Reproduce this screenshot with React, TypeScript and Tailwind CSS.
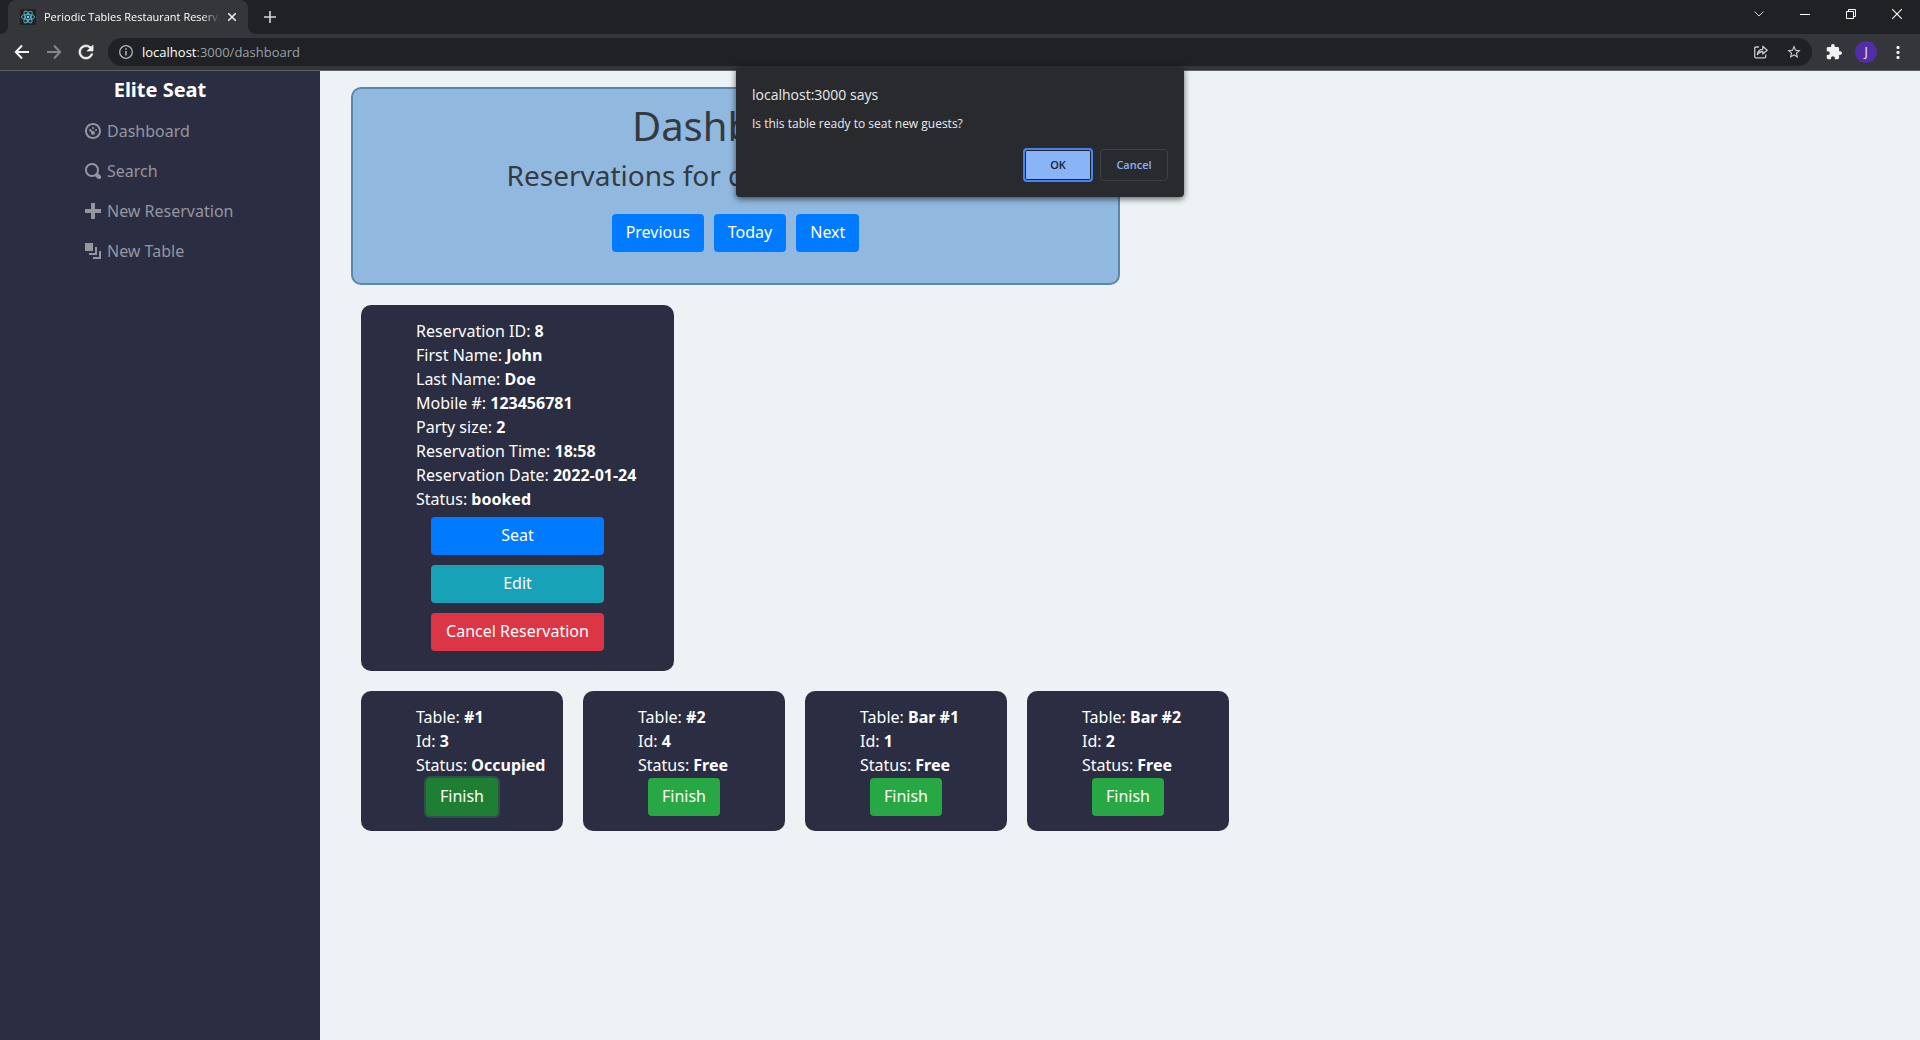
import React from "react";

const appFont = "font-['Noto_Sans','Open_Sans',sans-serif]";
const chromeFont = "font-['Open_Sans','Noto_Sans',sans-serif]";

const OI = {
  dashboard:
    "M4 0c-2.2 0-4 1.8-4 4s1.8 4 4 4 4-1.8 4-4-1.8-4-4-4zm0 1c1.66 0 3 1.34 3 3s-1.34 3-3 3-3-1.34-3-3 1.34-3 3-3zm0 1c-.28 0-.5.22-.5.5s.22.5.5.5.5-.22.5-.5-.22-.5-.5-.5zm-1.66 1a.5.5 0 0 0-.19.84l.91.91c-.02.08-.06.16-.06.25 0 .55.45 1 1 1s1-.45 1-1-.45-1-1-1c-.09 0-.17.04-.25.06l-.91-.91a.5.5 0 0 0-.44-.16.5.5 0 0 0-.06 0zm3.16 0c-.28 0-.5.22-.5.5s.22.5.5.5.5-.22.5-.5-.22-.5-.5-.5z",
  search:
    "M3.5 0c-1.93 0-3.5 1.57-3.5 3.5s1.57 3.5 3.5 3.5c.59 0 1.17-.14 1.66-.41a1 1 0 0 0 .13.13l1 1a1.02 1.02 0 1 0 1.44-1.44l-1-1a1 1 0 0 0-.16-.13c.27-.49.44-1.06.44-1.66 0-1.93-1.55-3.5-3.5-3.5zm0 1c1.39 0 2.5 1.11 2.5 2.5 0 .66-.24 1.27-.66 1.72-.01.01-.02.02-.03.03a1 1 0 0 0-.13.13c-.44.4-1.04.63-1.69.63-1.39 0-2.5-1.11-2.5-2.5s1.11-2.5 2.5-2.5z",
  plus: "M3 0v3h-3v2h3v3h2v-3h3v-2h-3v-3h-2z",
  layers: "M0 0v4h4v-4h-4zm5 2v3h-3v1h4v-4h-1zm2 2v3h-3v1h4v-4h-1z",
};

const navItems = [
  { label: "Dashboard", icon: OI.dashboard },
  { label: "Search", icon: OI.search },
  { label: "New Reservation", icon: OI.plus },
  { label: "New Table", icon: OI.layers },
];

const reservation = [
  ["Reservation ID", "8"],
  ["First Name", "John"],
  ["Last Name", "Doe"],
  ["Mobile #", "123456781"],
  ["Party size", "2"],
  ["Reservation Time", "18:58"],
  ["Reservation Date", "2022-01-24"],
  ["Status", "booked"],
];

const tables = [
  { name: "#1", id: "3", status: "Occupied", active: true },
  { name: "#2", id: "4", status: "Free", active: false },
  { name: "Bar #1", id: "1", status: "Free", active: false },
  { name: "Bar #2", id: "2", status: "Free", active: false },
];

function Favicon() {
  return (
    <svg viewBox="0 0 16 16" className="h-4 w-4 shrink-0">
      <rect width="16" height="16" rx="1" fill="#222222" />
      <g fill="none" stroke="#53b9d1" strokeWidth="0.9">
        <ellipse cx="8" cy="8" rx="6.6" ry="2.6" />
        <ellipse cx="8" cy="8" rx="6.6" ry="2.6" transform="rotate(60 8 8)" />
        <ellipse cx="8" cy="8" rx="6.6" ry="2.6" transform="rotate(120 8 8)" />
      </g>
      <circle cx="8" cy="8" r="1.3" fill="#61dafb" />
    </svg>
  );
}

function TabStrip() {
  return (
    <div className="flex h-[34px] bg-[#202124] text-white">
      <div className="flex w-2 bg-[#35363a]">
        <div className="w-full rounded-br-lg bg-[#202124]" />
      </div>
      <div className="flex w-60 items-center rounded-t-lg bg-[#35363a] pl-3">
        <Favicon />
        <span className="ml-2 w-[176px] overflow-hidden text-[11px] whitespace-nowrap [mask-image:linear-gradient(to_right,black_90%,transparent)]">
          Periodic Tables Restaurant Reservation
        </span>
        <button aria-label="Close tab" className="ml-2">
          <svg viewBox="0 0 8 8" className="h-2 w-2" stroke="#f1f3f4" strokeWidth="1.5">
            <path d="M0 0l8 8M8 0l-8 8" />
          </svg>
        </button>
      </div>
      <div className="flex w-2 bg-[#35363a]">
        <div className="w-full rounded-bl-lg bg-[#202124]" />
      </div>
      <button aria-label="New tab" className="ml-2">
        <svg viewBox="0 0 12 12" className="h-3 w-3" stroke="#d5d7da" strokeWidth="1.6">
          <path d="M6 0v12M0 6h12" />
        </svg>
      </button>
      <div className="ml-auto flex h-7 items-center">
        <button aria-label="Search tabs" className="flex w-[46px] justify-center">
          <svg viewBox="0 0 10 6" className="h-1.5 w-2.5" fill="none" stroke="#d5d7da">
            <path d="M0.5 0.5L5 5L9.500 0.5" />
          </svg>
        </button>
        <button aria-label="Minimize" className="flex w-[46px] justify-center">
          <svg viewBox="0 0 10 10" className="h-2.5 w-2.5" stroke="#fff">
            <path d="M0 5.500h10" />
          </svg>
        </button>
        <button aria-label="Restore" className="flex w-[46px] justify-center">
          <svg viewBox="0 0 10 10" className="h-2.5 w-2.5" fill="none" stroke="#fff">
            <path d="M0.5 2.5h7v7h-7zM2.500 2.500v-2h7v7h-2" />
          </svg>
        </button>
        <button aria-label="Close" className="flex w-[46px] justify-center">
          <svg viewBox="0 0 10 10" className="h-2.5 w-2.5" stroke="#fff" strokeWidth="1.1">
            <path d="M0 0l10 10M10 0L0 10" />
          </svg>
        </button>
      </div>
    </div>
  );
}

function Toolbar() {
  return (
    <div className="flex h-9 items-center bg-[#35363a] pr-[14px] pl-[14px]">
      <button aria-label="Back">
        <svg viewBox="0 0 16 16" className="h-4 w-4" fill="none" stroke="#f1f3f4" strokeWidth="2">
          <path d="M15 8H2M8 1.500L1.800 8L8 14.500" />
        </svg>
      </button>
      <button aria-label="Forward" className="ml-4">
        <svg viewBox="0 0 16 16" className="h-4 w-4" fill="none" stroke="#86878a" strokeWidth="2">
          <path d="M1 8H14M8 1.500L14.200 8L8 14.500" />
        </svg>
      </button>
      <button aria-label="Reload" className="ml-4">
        <svg viewBox="3 3 18 18" className="h-4 w-4" fill="#f1f3f4" stroke="#f1f3f4" strokeWidth="0.6">
          <path d="M17.650 6.350C16.200 4.900 14.210 4 12 4c-4.420 0-7.990 3.580-7.990 8s3.570 8 7.990 8c3.730 0 6.840-2.550 7.730-6h-2.080c-.82 2.330-3.040 4-5.650 4-3.310 0-6-2.690-6-6s2.690-6 6-6c1.660 0 3.140.69 4.220 1.780L13 11h7V4l-2.350 2.350z" />
        </svg>
      </button>
      <div className="ml-[14px] flex h-7 flex-1 items-center rounded-full bg-[#202124] pr-[10px] pl-[11px]">
        <svg viewBox="0 0 14 14" className="h-[14px] w-[14px]" fill="none" stroke="#b5b7ba" strokeWidth="1.300">
          <circle cx="7" cy="7" r="6.300" />
          <path d="M7 6v4.500M7 3.300v1.500" strokeWidth="1.500" />
        </svg>
        <span className="ml-[9px] flex-1 text-[13px] leading-5 text-[#9aa0a6]">
          <span className="text-white">localhost</span>:3000/dashboard
        </span>
        <button aria-label="Share">
          <svg viewBox="0 0 14 14" className="h-[14px] w-[14px]" fill="none" stroke="#c4c6c9" strokeWidth="1.300">
            <path d="M5 2H2Q.7 2 .7 3.300V11.500Q.7 12.800 2 12.800H10.500Q11.800 12.800 11.800 11.500V9.500" />
            <path d="M3.300 9.500Q4 4.300 8.800 4.300V1.300L13.200 5.300L8.800 9V6.500Q5.500 6.500 3.300 9.500Z" strokeLinejoin="round" />
          </svg>
        </button>
        <button aria-label="Bookmark" className="ml-[18px]">
          <svg viewBox="0 0 24 24" className="h-4 w-4" fill="#d0d2d5">
            <path d="M22 9.240l-7.190-.62L12 2 9.190 8.630 2 9.240l5.460 4.730L5.820 21 12 17.270 18.180 21l-1.630-7.030L22 9.240zM12 15.400l-3.760 2.270 1-4.280-3.320-2.880 4.380-.38L12 6.100l1.710 4.040 4.380.38-3.320 2.880 1 4.280L12 15.400z" />
          </svg>
        </button>
      </div>
      <button aria-label="Extensions" className="ml-[14px]">
        <svg viewBox="1 1 22 22" className="h-4 w-4" fill="#f1f3f4">
          <path d="M20.500 11H19V7c0-1.100-.9-2-2-2h-4V3.500C13 2.120 11.880 1 10.500 1S8 2.120 8 3.500V5H4c-1.100 0-1.990.9-1.990 2v3.800H3.500c1.490 0 2.700 1.210 2.700 2.700s-1.210 2.700-2.700 2.700H2V20c0 1.100.9 2 2 2h3.800v-1.500c0-1.490 1.210-2.700 2.700-2.700 1.490 0 2.700 1.210 2.700 2.700V22H17c1.100 0 2-.9 2-2v-4h1.500c1.380 0 2.500-1.120 2.500-2.500S21.880 11 20.500 11z" />
        </svg>
      </button>
      <button
        aria-label="Profile"
        className="ml-[13px] flex h-[22px] w-[22px] items-center justify-center rounded-full bg-[#512da8] text-xs text-white"
      >
        J
      </button>
      <button aria-label="Menu" className="ml-[13px]">
        <svg viewBox="0 0 16 16" className="h-4 w-4" fill="#f1f3f4">
          <rect x="6.500" y="2" width="3" height="3" rx="1" />
          <rect x="6.500" y="7" width="3" height="3" rx="1" />
          <rect x="6.500" y="12" width="3" height="3" rx="1" />
        </svg>
      </button>
    </div>
  );
}

function Sidebar() {
  return (
    <nav className="w-80 shrink-0 bg-[#2b2d42]">
      <h2 className="pt-1 text-center text-xl leading-[30px] font-bold text-white">Elite Seat</h2>
      <ul className="mt-[6px] pl-[85px]">
        {navItems.map((item) => (
          <li key={item.label}>
            <a href="#" className="flex h-10 items-center gap-[6px] text-base text-[#9596a0]">
              <svg viewBox="0 0 8 8" className="h-4 w-4" fill="currentColor">
                <path d={item.icon} />
              </svg>
              {item.label}
            </a>
          </li>
        ))}
      </ul>
    </nav>
  );
}

const btn = "h-[38px] rounded px-[14px] pb-[2px] text-base text-white whitespace-nowrap";

function Field({ label, value }: { label: string; value: string }) {
  return (
    <li className="whitespace-nowrap">
      {label}: <b>{value}</b>
    </li>
  );
}

function ConfirmDialog() {
  return (
    <div
      role="dialog"
      aria-label="localhost:3000 says"
      className={`absolute top-[66px] left-1/2 w-[448px] -translate-x-1/2 rounded bg-[#292a2d] px-4 pt-[19px] pb-[15px] text-[#e8eaed] shadow-[0_2px_6px_rgba(0,0,0,0.6)] ${chromeFont}`}
    >
      <p className="text-sm leading-5">localhost:3000 says</p>
      <p className="mt-[9px] text-xs leading-5">Is this table ready to seat new guests?</p>
      <div className="mt-[14px] flex items-center justify-end gap-[7px] text-[11px] font-semibold">
        <button className="h-[34px] w-[70px] rounded border-2 border-[#4285f4] bg-[#8ab4f8] text-[#202124] shadow-[inset_0_0_0_1px_#202124]">
          OK
        </button>
        <button className="h-8 w-[68px] rounded border border-[#3c4043] text-[#8ab4f8]">Cancel</button>
      </div>
    </div>
  );
}

export default function App() {
  return (
    <div className="relative flex min-h-screen flex-col bg-[#edf2f4]">
      <header className={chromeFont}>
        <TabStrip />
        <Toolbar />
        <div className="h-px bg-[#5f6064]" />
      </header>
      <div className={`flex flex-1 ${appFont}`}>
        <Sidebar />
        <main className="flex-1 pt-4 pl-[31px] text-white">
          <section className="w-[769px] rounded-[10px] border-2 border-[#5a87ae] bg-[#91b9e0] px-4 pt-[13px] pb-[31px] text-center text-[#343a40]">
            <h1 className="text-[40px] leading-[48px]">Dashboard</h1>
            <h4 className="mt-2 text-[28px] leading-[34px]">
              Reservations for date: <time className="font-['DejaVu_Sans',sans-serif] leading-none">2022-01-24</time>
            </h4>
            <div className="mt-[22px] flex justify-center gap-[10px]">
              <button className={`${btn} bg-[#007bff]`}>Previous</button>
              <button className={`${btn} bg-[#007bff]`}>Today</button>
              <button className={`${btn} bg-[#007bff]`}>Next</button>
            </div>
          </section>
          <div className="mt-5 flex flex-col items-start gap-5 pl-[10px]">
            <article className="flex w-[313px] flex-col rounded-[10px] bg-[#2b2d42] pt-[14px] pb-5">
              <ul className="pl-[55px] leading-6">
                {reservation.map(([label, value]) => (
                  <Field key={label} label={label} value={value} />
                ))}
              </ul>
              <div className="mt-[6px] flex w-[173px] flex-col gap-[10px] self-center">
                <button className={`${btn} bg-[#007bff]`}>Seat</button>
                <button className={`${btn} bg-[#17a2b8]`}>Edit</button>
                <button className={`${btn} bg-[#dc3545]`}>Cancel Reservation</button>
              </div>
            </article>
            <div className="flex gap-5">
              {tables.map((t) => (
                <article key={t.id} className="w-[202px] rounded-[10px] bg-[#2b2d42] pt-[14px] pb-[15px] pl-[55px]">
                  <ul className="leading-6">
                    <Field label="Table" value={t.name} />
                    <Field label="Id" value={t.id} />
                    <Field label="Status" value={t.status} />
                  </ul>
                  <button
                    className={
                      t.active
                        ? `${btn} mt-px ml-[10px] bg-[#1e7e34] ring-2 ring-[#2f5149]`
                        : `${btn} mt-px ml-[10px] bg-[#28a745]`
                    }
                  >
                    Finish
                  </button>
                </article>
              ))}
            </div>
          </div>
        </main>
      </div>
      <ConfirmDialog />
    </div>
  );
}
